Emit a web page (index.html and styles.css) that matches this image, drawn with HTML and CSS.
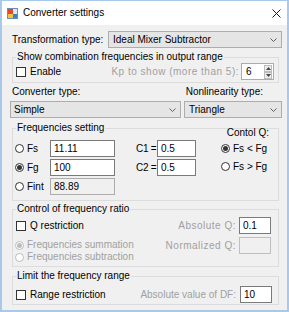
FILE: index.html
```html
<!DOCTYPE html>
<html lang="en">
<head>
    <meta charset="UTF-8">
    <title>Converter settings</title>
    <link rel="stylesheet" href="styles.css">
</head>
<body>
<div class="window">
    <div class="titlebar">
        <svg class="app-icon" width="11" height="11" viewBox="0 0 11 11">
            <rect x="0.5" y="0.5" width="10" height="10" fill="#dbe8f6" stroke="#6b8fb8"/>
            <rect x="1" y="1" width="5" height="5" fill="#e2492f"/>
            <rect x="1" y="6" width="5" height="4" fill="#f3c13a"/>
            <rect x="6" y="6" width="4" height="4" fill="#3b7fd0"/>
        </svg>
        <span class="title">Converter settings</span>
        <svg class="close" width="9" height="9" viewBox="0 0 9 9">
            <path d="M0.5 0.5 L8.5 8.5 M8.5 0.5 L0.5 8.5" stroke="#1a1a1a" stroke-width="1"/>
        </svg>
    </div>

    <div class="content">
        <div class="row-transform">
            <span class="transform-label">Transformation type:</span>
            <div class="combo combo-transform">
                <span>Ideal Mixer Subtractor</span>
                <svg class="chevron" width="7" height="4" viewBox="0 0 7 4"><path d="M0.5 0.5 L3.5 3.5 L6.5 0.5" fill="none" stroke="#606060"/></svg>
            </div>
        </div>

        <fieldset class="group group-show">
            <legend>Show combination frequencies in output range</legend>
            <div class="show-row">
                <span class="check"></span>
                <span class="check-text">Enable</span>
                <span class="disabled kp-label">Kp to show (more than 5):</span>
                <div class="numeric">
                    <span>6</span>
                    <div class="spin">
                        <span class="spin-btn"><svg width="5" height="3" viewBox="0 0 5 3"><path d="M0 3 L2.5 0 L5 3 Z" fill="#444"/></svg></span>
                        <span class="spin-btn"><svg width="5" height="3" viewBox="0 0 5 3"><path d="M0 0 L2.5 3 L5 0 Z" fill="#444"/></svg></span>
                    </div>
                </div>
            </div>
        </fieldset>

        <div class="labels-row">
            <span class="converter-label">Converter type:</span>
            <span class="nonlin-label">Nonlinearity type:</span>
        </div>
        <div class="combos-row">
            <div class="combo combo-simple">
                <span>Simple</span>
                <svg class="chevron" width="7" height="4" viewBox="0 0 7 4"><path d="M0.5 0.5 L3.5 3.5 L6.5 0.5" fill="none" stroke="#606060"/></svg>
            </div>
            <div class="combo combo-triangle">
                <span>Triangle</span>
                <svg class="chevron" width="7" height="4" viewBox="0 0 7 4"><path d="M0.5 0.5 L3.5 3.5 L6.5 0.5" fill="none" stroke="#606060"/></svg>
            </div>
        </div>

        <fieldset class="group group-freq">
            <legend>Frequencies setting</legend>
            <div class="freq-body">
                <div class="freq-left">
                    <span class="radio-item"><span class="radio"></span>Fs</span>
                    <span class="textbox">11.11</span>
                    <span class="radio-item"><span class="radio checked"></span>Fg</span>
                    <span class="textbox">100</span>
                    <span class="radio-item"><span class="radio"></span>Fint</span>
                    <span class="textbox readonly">88.89</span>
                </div>
                <div class="freq-mid">
                    <span class="c-label">C1 =</span>
                    <span class="textbox">0.5</span>
                    <span class="c-label">C2 =</span>
                    <span class="textbox">0.5</span>
                </div>
                <div class="freq-right">
                    <span class="contol-label">Contol Q:</span>
                    <span class="radio-item"><span class="radio checked"></span>Fs &lt; Fg</span>
                    <span class="radio-item"><span class="radio"></span>Fs &gt; Fg</span>
                </div>
            </div>
        </fieldset>

        <fieldset class="group group-ratio">
            <legend>Control of frequency ratio</legend>
            <div class="ratio-body">
                <div class="ratio-left">
                    <div class="check-row"><span class="check"></span><span class="check-text">Q restriction</span></div>
                    <span class="radio-item small disabled"><span class="radio checked"></span>Frequencies summation</span>
                    <span class="radio-item small disabled"><span class="radio"></span>Frequencies subtraction</span>
                </div>
                <div class="ratio-right">
                    <span class="disabled field-label">Absolute Q:</span>
                    <span class="textbox">0.1</span>
                    <span class="disabled field-label">Normalized Q:</span>
                    <span class="textbox off"></span>
                </div>
            </div>
        </fieldset>

        <fieldset class="group group-range">
            <legend>Limit the frequency range</legend>
            <div class="range-body">
                <span class="check"></span>
                <span class="check-text">Range restriction</span>
                <span class="disabled df-label">Absolute value of DF:</span>
                <span class="textbox df-box">10</span>
            </div>
        </fieldset>
    </div>
</div>
</body>
</html>
```

FILE: styles.css
```css
* {
    box-sizing: border-box;
}
body {
    margin: 0;
    font-family: "Liberation Sans", Arial, sans-serif;
    font-size: 10px;
    line-height: 12px;
    color: #000;
}
.window {
    width: 289px;
    height: 312px;
    border: 2px solid #a9c9ea;
    border-top-width: 1px;
    background: #f0f0f0;
    display: flex;
    flex-direction: column;
}
.titlebar {
    height: 24px;
    background: #fff;
    display: flex;
    align-items: center;
    padding: 0 6px 0 5px;
}
.app-icon {
    margin-right: 5px;
}
.title {
    flex: 1;
}
.content {
    flex: 1;
    padding: 0 5px 0 8px;
}

/* combo boxes */
.combo {
    height: 17px;
    background: #e5e5e5;
    border: 1px solid #adadad;
    display: flex;
    align-items: center;
    justify-content: space-between;
    padding: 0 4px 0 4px;
}
.chevron {
    display: block;
}
.row-transform {
    margin-top: 6px;
    display: flex;
}
.transform-label {
    width: 98px;
    padding-left: 2px;
    line-height: 17px;
}
.combo-transform {
    flex: 1;
}

/* group boxes */
.group {
    margin: 0 3px 0 2px;
    padding: 0;
    border: 1px solid #dcdcdc;
    min-width: 0;
}
.group legend {
    margin-left: 3px;
    padding: 0 1px;
    line-height: 12px;
}
.group-show {
    margin-top: 3px;
}
.show-row {
    height: 17px;
    margin: 0 4px 2px 3px;
    display: flex;
    align-items: center;
}
.check {
    width: 10px;
    height: 10px;
    border: 1px solid #333;
    background: #fff;
    flex: none;
}
.check-text {
    margin-left: 4px;
}
.disabled {
    color: #a0a0a0;
}
.kp-label {
    margin-left: auto;
    margin-right: 2px;
    letter-spacing: 0.5px;
}
.numeric {
    width: 33px;
    height: 17px;
    background: #fff;
    border: 1px solid #acacac;
    display: flex;
    align-items: center;
    padding-left: 4px;
    justify-content: space-between;
}
.spin {
    display: flex;
    flex-direction: column;
    margin-right: 1px;
}
.spin-btn {
    width: 8px;
    height: 7px;
    border: 1px solid #bcbcbc;
    background: #ececec;
    display: flex;
    align-items: center;
    justify-content: center;
}
.spin-btn svg {
    display: block;
}

.labels-row {
    margin-top: 3px;
    display: flex;
    justify-content: space-between;
}
.converter-label {
    padding-left: 2px;
}
.nonlin-label {
    margin-right: 19px;
}
.combos-row {
    margin-top: 3px;
    display: flex;
    gap: 3px;
}
.combo-simple {
    width: 171px;
    padding-left: 3px;
}
.combo-triangle {
    flex: 1;
}

/* text boxes and radios */
.textbox {
    height: 17px;
    background: #fff;
    border: 1px solid #7a7a7a;
    padding-left: 3px;
    line-height: 15px;
}
.textbox.readonly {
    background: #f0f0f0;
    border-color: #acacac;
}
.textbox.off {
    background: #f0f0f0;
    border-color: #bfbfbf;
}
.radio-item {
    display: flex;
    align-items: center;
}
.radio {
    width: 9px;
    height: 9px;
    border: 1px solid #333;
    border-radius: 50%;
    background: #fff;
    margin-right: 3px;
    flex: none;
    display: flex;
    align-items: center;
    justify-content: center;
}
.radio.checked::after {
    content: "";
    width: 5px;
    height: 5px;
    border-radius: 50%;
    background: #333;
}
.radio-item.disabled .radio {
    border-color: #bcbcbc;
}
.radio-item.disabled .radio.checked::after {
    background: #bcbcbc;
}

.group-freq {
    margin-top: 4px;
}
.freq-body {
    display: flex;
    padding: 6px 0 5px 2px;
}
.freq-left {
    display: grid;
    grid-template-columns: 35px 65px;
    grid-auto-rows: 17px;
    row-gap: 2px;
}
.freq-mid {
    margin-left: 21px;
    display: grid;
    grid-template-columns: 21px 39px;
    grid-auto-rows: 17px;
    row-gap: 2px;
    align-items: center;
}
.c-label {
    white-space: nowrap;
    letter-spacing: -0.3px;
}
.freq-mid .textbox {
    align-self: stretch;
}
.freq-right {
    margin: -13px 9px 0 auto;
    width: 48px;
    display: grid;
    grid-template-rows: 12px 17px 17px;
    row-gap: 1px;
    white-space: nowrap;
}
.contol-label {
    text-align: right;
}

.group-ratio {
    margin-top: 2px;
}
.ratio-body {
    display: flex;
    justify-content: space-between;
    padding: 2px 7px 3px 3px;
}
.check-row {
    height: 17px;
    display: flex;
    align-items: center;
    margin-bottom: 5px;
}
.radio-item.small {
    height: 12px;
    margin-left: -1px;
}
.ratio-right {
    display: grid;
    grid-template-columns: auto 32px;
    grid-template-rows: 17px 17px;
    column-gap: 3px;
    row-gap: 3px;
    align-items: center;
    align-self: flex-start;
}
.ratio-right .textbox {
    align-self: stretch;
}
.field-label {
    text-align: right;
    letter-spacing: 0.5px;
}

.group-range {
    margin-top: 3px;
}
.range-body {
    height: 17px;
    margin: 4px 6px 1px 3px;
    display: flex;
    align-items: center;
}
.df-label {
    margin-left: auto;
    margin-right: 4px;
}
.df-box {
    width: 32px;
}
```
